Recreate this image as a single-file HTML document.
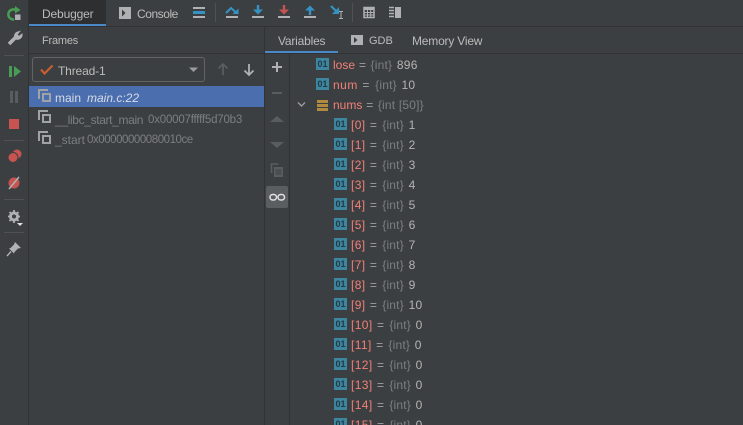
<!DOCTYPE html>
<html><head><meta charset="utf-8">
<style>
html,body{margin:0;padding:0;background:#3c3f41;}
#r{position:relative;width:743px;height:425px;overflow:hidden;background:#3c3f41;font-family:"Liberation Sans",sans-serif;font-size:12px;color:#bbb;}
#r>*{position:absolute;}
.t{white-space:pre;line-height:16px;height:16px;}
.b{background:#323232;}
.ic{width:13px;height:12px;background:#3e86a0;color:#1d3a46;font:bold 9px/12px "Liberation Sans",sans-serif;text-align:center;}
.n{color:#f08078;letter-spacing:.4px}.g{color:#7c7f80;letter-spacing:.2px}.v{color:#b4b4b4;letter-spacing:.3px;margin-left:1px}.e{color:#a0a0a0;letter-spacing:1px}
.top .n{letter-spacing:0}.top .e{letter-spacing:.6px}
svg{position:absolute;left:0;top:0;}
</style></head><body><div id="r">
<div class="b" style="left:28px;top:0;width:1px;height:425px"></div>
<div style="left:29px;top:0;width:77px;height:24px;background:#2d2f31"></div>
<div style="left:29px;top:24px;width:77px;height:2px;background:#4a88c7"></div>
<div class="b" style="left:106px;top:26px;width:637px;height:1px"></div>
<div class="b" style="left:29px;top:26px;width:77px;height:1px"></div>
<div class="b" style="left:29px;top:53px;width:714px;height:1px"></div>
<div style="left:265px;top:51px;width:73px;height:2px;background:#4a88c7"></div>
<div class="b" style="left:264px;top:27px;width:1px;height:398px"></div>
<div class="b" style="left:289px;top:54px;width:1px;height:371px"></div>
<div style="left:29px;top:86px;width:235px;height:21px;background:#4b6eaf"></div>

<div class="t" style="left:42px;top:6px;letter-spacing:-.15px">Debugger</div>
<div class="t" style="left:137px;top:6px;letter-spacing:-.45px">Console</div>
<div class="t" style="left:42px;top:33px;font-size:11px;letter-spacing:-.2px">Frames</div>
<div class="t" style="left:278px;top:33px;letter-spacing:-.2px">Variables</div>
<div class="t" style="left:369px;top:33px;font-size:11px">GDB</div>
<div class="t" style="left:412px;top:33px;letter-spacing:-.2px">Memory View</div>

<div style="left:32px;top:57px;width:171px;height:23px;border:1px solid #646464;border-radius:3px"></div>
<div class="t" style="left:58px;top:63px;letter-spacing:-.15px">Thread-1</div>

<div class="t" style="left:55px;top:90px;color:#d6dbe6">main</div>
<div class="t" style="left:87px;top:90px;color:#d6dbe6;font-style:italic">main.c:22</div>
<div class="t" style="left:55px;top:112px;color:#7c7f80;letter-spacing:-.35px">__libc_start_main</div>
<div class="t" style="left:148px;top:112px;color:#7c7f80;font-size:11.5px;letter-spacing:-.2px">0x00007fffff5d70b3</div>
<div class="t" style="left:55px;top:132px;color:#7c7f80">_start</div>
<div class="t" style="left:87px;top:132px;color:#7c7f80;font-size:11.5px;letter-spacing:-.45px">0x00000000080010ce</div>

<svg width="743" height="425" fill="none">
<!-- rerun -->
<path d="M16 10.200A5 5 0 1 0 14 19.400" stroke="#499c54" stroke-width="2.500"/>
<path d="M15 6l5.500 4-5.500 3.500z" fill="#499c54"/>
<rect x="15" y="14.500" width="5.500" height="5.500" fill="#afb1b3"/>
<!-- wrench -->
<path d="M9 44l7-7" stroke="#afb1b3" stroke-width="3.600"/>
<path d="M14.500 37.500a4.500 4.500 0 0 1 3.500-5.500l1.500-.5-2.500 3 2 2 3-2.500a4.500 4.500 0 0 1-6 5z" fill="#afb1b3" stroke="#afb1b3"/>
<rect x="4" y="55" width="20" height="1" fill="#515151"/>
<!-- resume -->
<rect x="9" y="66" width="3" height="11" fill="#499c54"/>
<path d="M14 66l7 5.500-7 5.500z" fill="#499c54"/>
<!-- pause -->
<rect x="10" y="91" width="3" height="12" fill="#5a5d5f"/>
<rect x="15" y="91" width="3" height="12" fill="#5a5d5f"/>
<!-- stop -->
<rect x="9" y="119" width="10" height="10" fill="#c75450"/>
<rect x="4" y="140" width="20" height="1" fill="#515151"/>
<!-- breakpoints -->
<circle cx="17" cy="154" r="4.500" fill="#c75450"/>
<circle cx="13" cy="157.500" r="5" fill="#c75450" stroke="#3c3f41"/>
<!-- mute -->
<circle cx="14" cy="183" r="5.500" fill="#c75450"/>
<path d="M9 189l10-12" stroke="#afb1b3" stroke-width="1.500"/>
<rect x="4" y="199" width="20" height="1" fill="#515151"/>
<!-- gear -->
<circle cx="14" cy="216.500" r="3.700" stroke="#afb1b3" stroke-width="2.600"/>
<path d="M14 210v13M8 216.500h12M9.500 212l9 9M18.500 212l-9 9" stroke="#afb1b3" stroke-width="1.800"/>
<circle cx="14" cy="216.500" r="2" fill="#3c3f41"/>
<path d="M17 223h6l-3 3z" fill="#dfe1e3"/>
<rect x="4" y="232" width="20" height="1" fill="#515151"/>
<!-- pin -->
<path d="M15 242l6 6-3 .5-3.500 3.500-.5 1.500-5-5 1.500-.5 3.500-3.500z" fill="#afb1b3"/>
<path d="M7 256l4-4.500" stroke="#afb1b3" stroke-width="1.400"/>

<!-- console icon -->
<rect x="119" y="7" width="12" height="12" fill="#afb1b3"/>
<path d="M122 9.500l3.500 3.500-3.500 3.500z" fill="#3c3f41"/>
<!-- hamburger -->
<rect x="193" y="7" width="12" height="2" fill="#afb1b3"/>
<rect x="193" y="11" width="12" height="3" fill="#3592c4"/>
<rect x="193" y="16" width="12" height="2" fill="#afb1b3"/>
<rect x="215" y="3" width="1" height="19" fill="#515151"/>
<!-- step over -->
<path d="M226 13l5-5 5 4.500" stroke="#3592c4" stroke-width="2"/>
<path d="M232.500 14h6v-5.500z" fill="#3592c4"/>
<rect x="226" y="16" width="12" height="2" fill="#afb1b3"/>
<!-- step into -->
<path d="M258 5v6" stroke="#3592c4" stroke-width="2.400"/>
<path d="M253 9.500h10l-5 5z" fill="#3592c4"/>
<rect x="252" y="16" width="12" height="2" fill="#afb1b3"/>
<!-- force step into -->
<path d="M284 5v6" stroke="#c75450" stroke-width="2.400"/>
<path d="M279 9.500h10l-5 5z" fill="#c75450"/>
<rect x="278" y="16" width="12" height="2" fill="#afb1b3"/>
<!-- step out -->
<path d="M310 9v6" stroke="#3592c4" stroke-width="2.400"/>
<path d="M305 10.500h10l-5-5z" fill="#3592c4"/>
<rect x="304" y="16" width="12" height="2" fill="#afb1b3"/>
<!-- run to cursor -->
<path d="M331 6l5 5" stroke="#3592c4" stroke-width="2.200"/>
<path d="M339 7v7h-7z" fill="#3592c4"/>
<path d="M339 11.500h4M339 18.500h4M341 11.500v7" stroke="#afb1b3" stroke-width="1"/>
<rect x="352" y="3" width="1" height="19" fill="#515151"/>
<!-- calc -->
<rect x="364" y="7.500" width="10" height="10" stroke="#afb1b3" stroke-width="1.500"/>
<rect x="364" y="7" width="10" height="3" fill="#afb1b3"/>
<path d="M367.500 10v7M370.700 10v7M364 12.500h10M364 15h10" stroke="#afb1b3" stroke-width="1"/>
<!-- trace -->
<path d="M389 7.500h5M389 10.500h5M389 13.500h5M389 16.500h5" stroke="#afb1b3" stroke-width="1.500"/>
<rect x="395" y="7" width="6" height="11" fill="#afb1b3"/>
<!-- GDB icon -->
<rect x="351" y="35" width="12" height="10" fill="#afb1b3"/>
<path d="M354 37l3.500 3-3.500 3z" fill="#3c3f41"/>
<!-- check -->
<path d="M41 69.500l3.500 4 8-8" stroke="#c75e30" stroke-width="2.200"/>
<!-- dropdown -->
<path d="M189 67.500h9l-4.500 4.500z" fill="#9a9c9e"/>
<!-- arrows -->
<path d="M223 75v-11M218.500 68.500l4.500-4.500 4.500 4.500" stroke="#5a5d5f" stroke-width="1.800"/>
<path d="M249 64v11M244.500 70.500l4.500 4.500 4.500-4.500" stroke="#afb1b3" stroke-width="1.800"/>
<!-- frames -->
<g stroke="#a0a2a4" stroke-width="2">
<path d="M39 99v-9h9"/><rect x="43" y="94" width="7" height="7"/>
<path d="M39 120v-9h9"/><rect x="43" y="115" width="7" height="7"/>
<path d="M39 141v-9h9"/><rect x="43" y="136" width="7" height="7"/>
</g>
<!-- side toolbar -->
<path d="M277 62v10M272 67h10" stroke="#afb1b3" stroke-width="2"/>
<path d="M272 93h10" stroke="#5a5d5f" stroke-width="2"/>
<path d="M270 122l7-6 7 6z" fill="#5a5d5f"/>
<path d="M270 142l7 6 7-6z" fill="#5a5d5f"/>
<path d="M271.500 173v-9h7" stroke="#5a5d5f" stroke-width="1.600"/>
<rect x="274" y="167" width="9" height="10" fill="#5a5d5f"/>
<path d="M275.500 170h6M275.500 172h6M275.500 174h6" stroke="#3c3f41"/>
<rect x="266" y="186" width="22" height="22" rx="2" fill="#5b5e60"/>
<rect x="270" y="194.500" width="6.500" height="5.500" rx="2.700" stroke="#dfe1e3" stroke-width="1.500"/>
<rect x="278" y="194.500" width="6.500" height="5.500" rx="2.700" stroke="#dfe1e3" stroke-width="1.500"/>
<!-- expander + nums -->
<path d="M298 102.500l3.500 3.500 3.500-3.500" stroke="#9a9c9e" stroke-width="1.400"/>
<rect x="317" y="100" width="11" height="3" fill="#b08a3e"/>
<rect x="317" y="104" width="11" height="3" fill="#b08a3e"/>
<rect x="317" y="108" width="11" height="3" fill="#b08a3e"/>
</svg>

<div class="ic" style="left:316px;top:58px">01</div><div class="t top" style="left:333px;top:57px"><span class="n">lose</span><span class="e"> = </span><span class="g">{int}</span><span class="v"> 896</span></div>
<div class="ic" style="left:316px;top:78px">01</div><div class="t top" style="left:333px;top:77px"><span class="n" style="letter-spacing:.5px">num</span><span class="e" style="letter-spacing:1.2px"> = </span><span class="g">{int}</span><span class="v"> 10</span></div>
<div class="t top" style="left:333px;top:97px"><span class="n">nums</span><span class="e"> = </span><span class="g">{int [50]}</span></div>

<div class="ic" style="left:334px;top:118px">01</div><div class="t" style="left:351px;top:117px"><span class="n">[0]</span><span class="e"> = </span><span class="g">{int}</span><span class="v"> 1</span></div>
<div class="ic" style="left:334px;top:138px">01</div><div class="t" style="left:351px;top:137px"><span class="n">[1]</span><span class="e"> = </span><span class="g">{int}</span><span class="v"> 2</span></div>
<div class="ic" style="left:334px;top:158px">01</div><div class="t" style="left:351px;top:157px"><span class="n">[2]</span><span class="e"> = </span><span class="g">{int}</span><span class="v"> 3</span></div>
<div class="ic" style="left:334px;top:178px">01</div><div class="t" style="left:351px;top:177px"><span class="n">[3]</span><span class="e"> = </span><span class="g">{int}</span><span class="v"> 4</span></div>
<div class="ic" style="left:334px;top:198px">01</div><div class="t" style="left:351px;top:197px"><span class="n">[4]</span><span class="e"> = </span><span class="g">{int}</span><span class="v"> 5</span></div>
<div class="ic" style="left:334px;top:218px">01</div><div class="t" style="left:351px;top:217px"><span class="n">[5]</span><span class="e"> = </span><span class="g">{int}</span><span class="v"> 6</span></div>
<div class="ic" style="left:334px;top:238px">01</div><div class="t" style="left:351px;top:237px"><span class="n">[6]</span><span class="e"> = </span><span class="g">{int}</span><span class="v"> 7</span></div>
<div class="ic" style="left:334px;top:258px">01</div><div class="t" style="left:351px;top:257px"><span class="n">[7]</span><span class="e"> = </span><span class="g">{int}</span><span class="v"> 8</span></div>
<div class="ic" style="left:334px;top:278px">01</div><div class="t" style="left:351px;top:277px"><span class="n">[8]</span><span class="e"> = </span><span class="g">{int}</span><span class="v"> 9</span></div>
<div class="ic" style="left:334px;top:298px">01</div><div class="t" style="left:351px;top:297px"><span class="n">[9]</span><span class="e"> = </span><span class="g">{int}</span><span class="v"> 10</span></div>
<div class="ic" style="left:334px;top:318px">01</div><div class="t" style="left:351px;top:317px"><span class="n">[10]</span><span class="e"> = </span><span class="g">{int}</span><span class="v"> 0</span></div>
<div class="ic" style="left:334px;top:338px">01</div><div class="t" style="left:351px;top:337px"><span class="n">[11]</span><span class="e"> = </span><span class="g">{int}</span><span class="v"> 0</span></div>
<div class="ic" style="left:334px;top:358px">01</div><div class="t" style="left:351px;top:357px"><span class="n">[12]</span><span class="e"> = </span><span class="g">{int}</span><span class="v"> 0</span></div>
<div class="ic" style="left:334px;top:378px">01</div><div class="t" style="left:351px;top:377px"><span class="n">[13]</span><span class="e"> = </span><span class="g">{int}</span><span class="v"> 0</span></div>
<div class="ic" style="left:334px;top:398px">01</div><div class="t" style="left:351px;top:397px"><span class="n">[14]</span><span class="e"> = </span><span class="g">{int}</span><span class="v"> 0</span></div>
<div class="ic" style="left:334px;top:418px">01</div><div class="t" style="left:351px;top:417px"><span class="n">[15]</span><span class="e"> = </span><span class="g">{int}</span><span class="v"> 0</span></div>
</div></body></html>
